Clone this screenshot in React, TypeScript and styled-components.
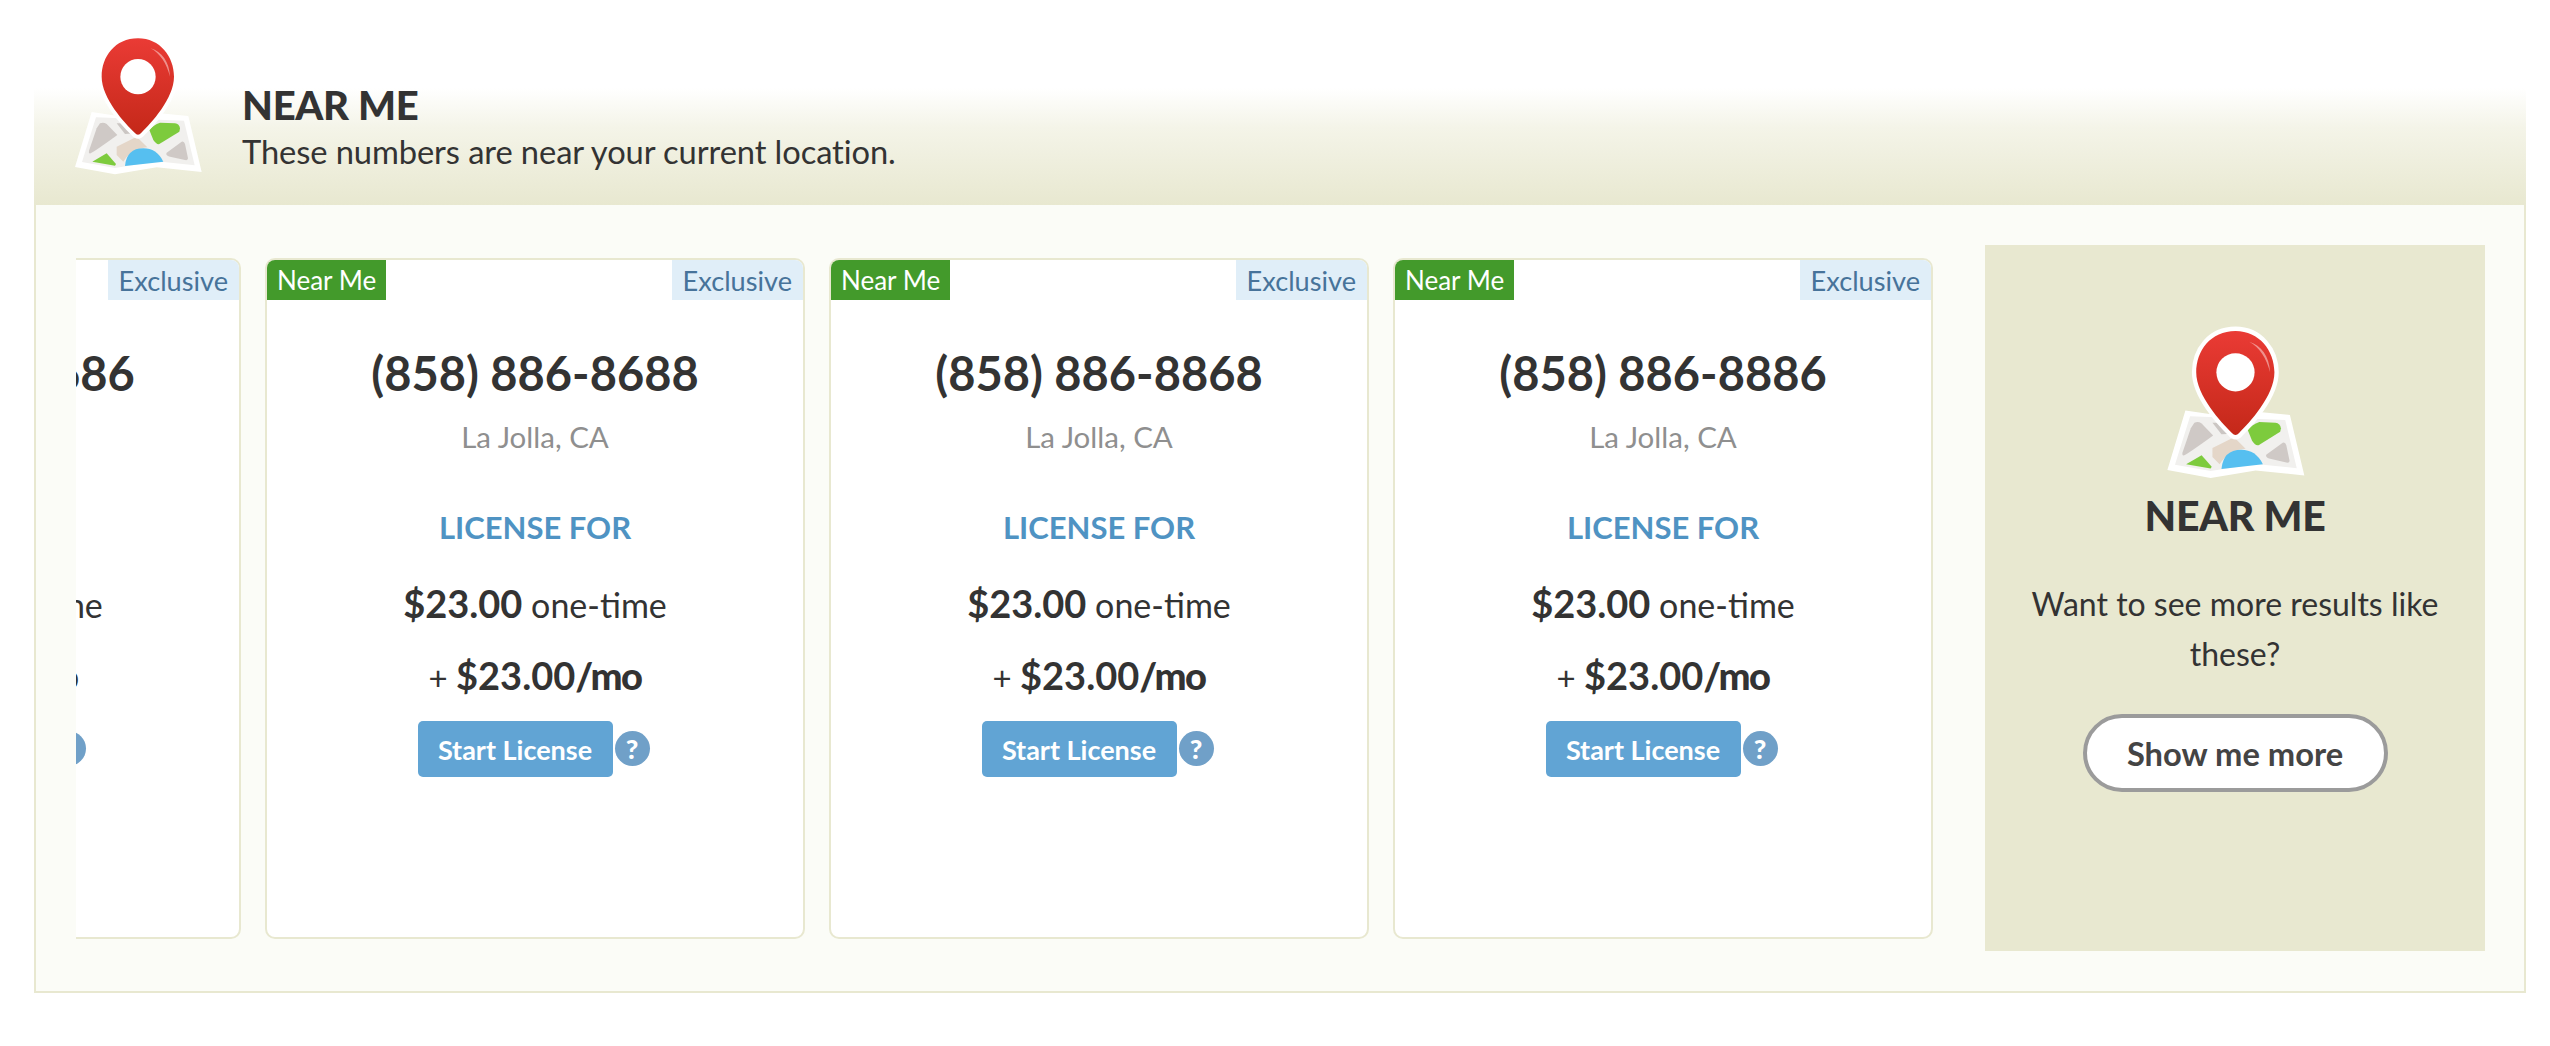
import React from "react";
import styled, { createGlobalStyle } from "styled-components";

const GlobalStyle = createGlobalStyle`
  html, body {
    margin: 0;
    padding: 0;
    background: #fff;
    color: #333;
    font-family: "Lato", "Liberation Sans", sans-serif;
  }
`;

const Page = styled.div`
  width: 2550px;
  height: 1046px;
  padding: 0 24px 0 34px;
  box-sizing: border-box;
  overflow: hidden;
`;

const Header = styled.header`
  height: 205px;
  box-sizing: border-box;
  padding: 20px 0 0 24px;
  display: flex;
  align-items: flex-start;
  gap: 24px;
  background: linear-gradient(to bottom, #fff 0, #fff 88px, #f4f4e8 128px, #e8e8d0 205px);
`;

const HeaderText = styled.div`
  padding-top: 62px;
`;

const Title = styled.h1`
  margin: 0;
  font-size: 40px;
  line-height: 46px;
  font-weight: 900;
  letter-spacing: -0.3px;
`;

const Subtitle = styled.p`
  margin: 2px 0 0;
  font-size: 32.7px;
  line-height: 44px;
  letter-spacing: -0.1px;
`;

const Body = styled.section`
  height: 788px;
  box-sizing: border-box;
  padding: 40px 39px 39px 40px;
  display: flex;
  justify-content: space-between;
  background: #fbfcf7;
  border: 2px solid #e8e8d0;
  border-top: 0;
`;

const Viewport = styled.div`
  width: 1870px;
  overflow: hidden;
  padding-top: 13px;
`;

const Track = styled.div`
  display: flex;
  gap: 24px;
  margin-left: -375px;
`;

const Card = styled.article`
  flex: 0 0 540px;
  height: 681px;
  box-sizing: border-box;
  border: 2px solid #e8e8d0;
  border-radius: 10px;
  background: #fff;
  display: flex;
  flex-direction: column;
  align-items: center;
  overflow: hidden;
`;

const TagRow = styled.div`
  width: 100%;
  height: 40px;
  display: flex;
  justify-content: space-between;
`;

const Tag = styled.span<{ $variant: "near" | "exclusive" }>`
  height: 40px;
  padding: 0 ${(props) => (props.$variant === "near" ? 10 : 11)}px;
  display: flex;
  align-items: center;
  font-size: ${(props) => (props.$variant === "near" ? 26 : 27.2)}px;
  background: ${(props) => (props.$variant === "near" ? "#439a2b" : "#e0eef8")};
  color: ${(props) => (props.$variant === "near" ? "#fff" : "#47739a")};
`;

const Phone = styled.div`
  margin-top: 43px;
  font-size: 47px;
  line-height: 60px;
  font-weight: 700;
`;

const City = styled.div`
  margin-top: 16px;
  font-size: 29.5px;
  line-height: 36px;
  color: #8f8f8f;
`;

const LicenseFor = styled.div`
  margin-top: 52px;
  font-size: 31px;
  line-height: 40px;
  font-weight: 700;
  color: #4f93c3;
`;

const Price = styled.div`
  margin-top: 34px;
  font-size: 34px;
  line-height: 44px;
`;

const Monthly = styled(Price)`
  margin-top: 26px;
  font-size: 33px;
`;

const Amount = styled.strong`
  font-size: 38px;
  font-weight: 700;
`;

const Per = styled.span`
  font-weight: 900;
  letter-spacing: -1.5px;
`;

const ActionRow = styled.div`
  margin-top: 22px;
  margin-right: 3px;
  display: flex;
  align-items: flex-start;
  gap: 2px;
`;

const StartButton = styled.button`
  width: 195px;
  height: 56px;
  border: 0;
  border-radius: 5px;
  background: #61a4d4;
  color: #fff;
  font: 700 27px "Lato", sans-serif;
  padding: 0;
`;

const Help = styled.span`
  width: 35px;
  height: 35px;
  margin-top: 10px;
  border-radius: 50%;
  background: #70a0c8;
  color: #fff;
  font-size: 27px;
  font-weight: 900;
  display: flex;
  align-items: center;
  justify-content: center;
`;

const Promo = styled.aside`
  width: 500px;
  height: 706px;
  box-sizing: border-box;
  padding-top: 66px;
  background: #e8e8d0;
  display: flex;
  flex-direction: column;
  align-items: center;
  text-align: center;
`;

const PromoTitle = styled.h2`
  margin: -5px 0 0;
  font-size: 41px;
  line-height: 52px;
  font-weight: 900;
  letter-spacing: -0.3px;
`;

const PromoText = styled.p`
  margin: 37px 30px 0;
  font-size: 32px;
  line-height: 50px;
`;

const MoreButton = styled.button`
  margin-top: 35px;
  width: 305px;
  height: 78px;
  box-sizing: border-box;
  border: 4px solid #9b9b9b;
  border-radius: 39px;
  background: #fff;
  color: #444;
  font: 700 32.7px "Lato", sans-serif;
  padding: 0;
`;

function MapPin({ width, height }: { width: number; height: number }) {
  const id = `pin-${width}`;
  return (
    <svg width={width} height={height} viewBox="-6 0 480 510" style={{ flexShrink: 0 }}>
      <defs>
        <linearGradient id={id} x1="0" y1="0" x2="0" y2="1">
          <stop offset="0" stopColor="#ea3b35" />
          <stop offset="1" stopColor="#c42819" />
        </linearGradient>
      </defs>
      <path d="M95 276 L190 290 L300 280 L385 288 L425 456 L290 442 L165 463 L45 441 Z" fill="#fff" />
      <path d="M108 292 L372 302 L404 436 L290 424 L165 444 L66 426 Z" fill="#f1f0ee" />
      <path d="M120 310 Q130 305 140 312 L172 345 Q110 390 92 400 Q85 402 87 392 L110 325 Z" fill="#cfc9c6" />
      <path d="M170 310 L205 310 L225 340 L195 342 Z" fill="#cbc6c3" />
      <path d="M268 330 Q280 315 300 308 L345 310 Q358 312 360 325 L358 335 L298 372 Q290 375 280 360 Z" fill="#7dcb3d" />
      <path d="M320 398 L365 365 Q372 362 375 372 L384 415 Q384 422 375 420 L330 410 Q315 405 320 398 Z" fill="#cfc9c6" />
      <path d="M97 425 L140 400 L168 432 L165 437 Z" fill="#7dcb3d" />
      <path d="M170 380 L230 350 L262 382 Q215 385 190 425 L170 405 Z" fill="#e4d6c8" />
      <path d="M195 438 Q200 385 250 385 Q290 385 310 425 Z" fill="#56bff0" />
      <path
        d="M234 55 C165 55 125 110 125 170 C125 235 195 310 224 338 Q234 350 244 338 C273 310 342 235 342 170 C342 110 300 55 234 55 Z"
        fill={`url(#${id})`}
        stroke="#fff"
        strokeWidth="24"
        strokeLinejoin="round"
        paintOrder="stroke"
      />
      <path d="M272 85 C305 95 328 125 330 170 C320 130 300 100 272 85 Z" fill="#fff" opacity="0.45" />
      <circle cx="234" cy="170" r="53" fill="#fff" />
    </svg>
  );
}

const numbers = ["(858) 886-8686", "(858) 886-8688", "(858) 886-8868", "(858) 886-8886"];

export default function App(): JSX.Element {
  return (
    <Page>
      <GlobalStyle />
      <Header>
        <MapPin width={160} height={170} />
        <HeaderText>
          <Title>NEAR ME</Title>
          <Subtitle>These numbers are near your current location.</Subtitle>
        </HeaderText>
      </Header>
      <Body>
        <Viewport>
          <Track>
            {numbers.map((phone) => (
              <Card key={phone}>
                <TagRow>
                  <Tag $variant="near">Near Me</Tag>
                  <Tag $variant="exclusive">Exclusive</Tag>
                </TagRow>
                <Phone>{phone}</Phone>
                <City>La Jolla, CA</City>
                <LicenseFor>LICENSE FOR</LicenseFor>
                <Price>
                  <Amount>$23.00</Amount> one-time
                </Price>
                <Monthly>
                  + <Amount>$23.00<Per>/mo</Per></Amount>
                </Monthly>
                <ActionRow>
                  <StartButton>Start License</StartButton>
                  <Help>?</Help>
                </ActionRow>
              </Card>
            ))}
          </Track>
        </Viewport>
        <Promo>
          <MapPin width={173} height={184} />
          <PromoTitle>NEAR ME</PromoTitle>
          <PromoText>Want to see more results like these?</PromoText>
          <MoreButton>Show me more</MoreButton>
        </Promo>
      </Body>
    </Page>
  );
}
